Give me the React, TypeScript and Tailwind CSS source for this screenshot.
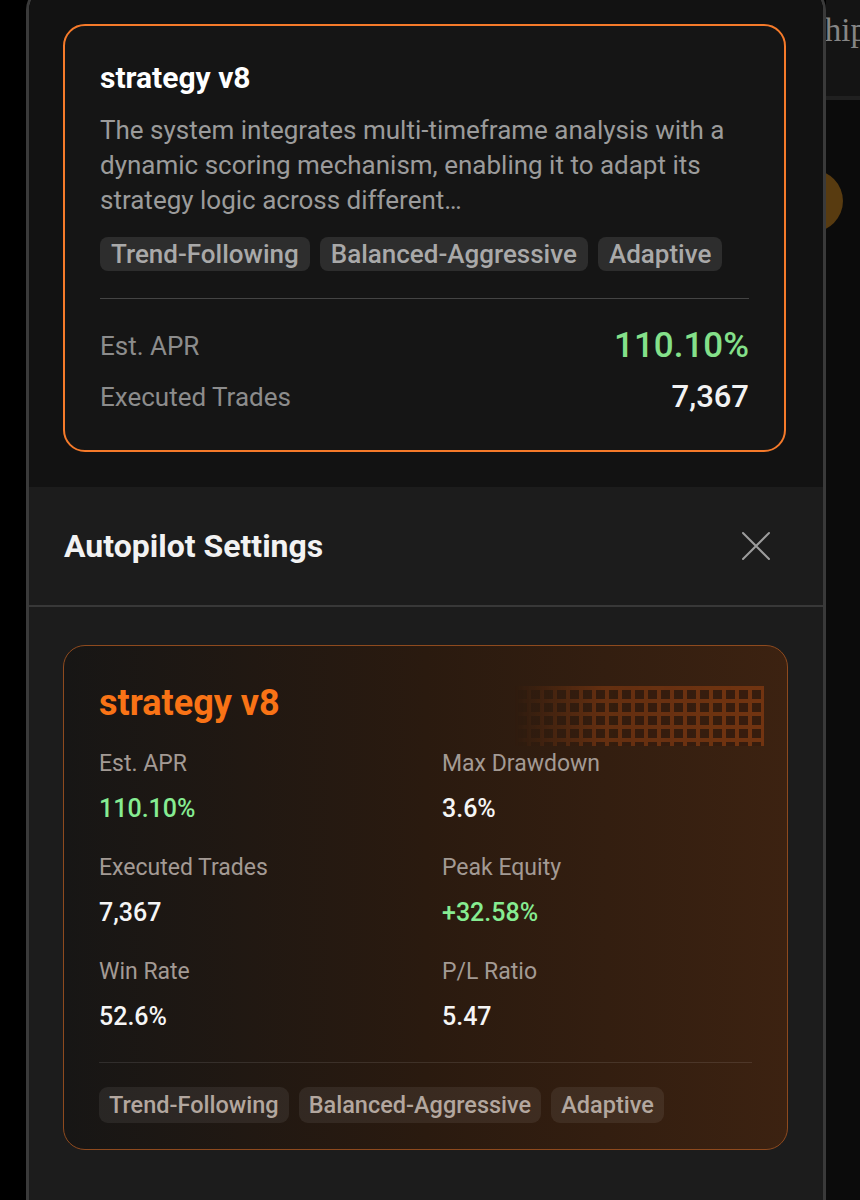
import React from 'react';

const tags = ['Trend-Following', 'Balanced-Aggressive', 'Adaptive'];

const stats = [
  { label: 'Est. APR', value: '110.10%', green: true },
  { label: 'Max Drawdown', value: '3.6%' },
  { label: 'Executed Trades', value: '7,367' },
  { label: 'Peak Equity', value: '+32.58%', green: true },
  { label: 'Win Rate', value: '52.6%' },
  { label: 'P/L Ratio', value: '5.47' },
];

function GridDeco() {
  return (
    <svg width="250" height="60" viewBox="0 0 250 60" className="absolute right-[23px] top-[40px]">
      <defs>
        <pattern id="cells" width="13" height="13" patternUnits="userSpaceOnUse">
          <rect width="13" height="13" fill="#8a3d12" />
          <rect x="4" y="4" width="9" height="9" fill="#361c0e" />
        </pattern>
        <linearGradient id="fade" x1="0" x2="1" y1="0" y2="0">
          <stop offset="0" stopColor="#fff" stopOpacity="0" />
          <stop offset="0.35" stopColor="#fff" stopOpacity="0.8" />
          <stop offset="1" stopColor="#fff" stopOpacity="1" />
        </linearGradient>
        <mask id="fademask">
          <rect width="250" height="60" fill="url(#fade)" />
        </mask>
      </defs>
      <rect width="250" height="60" fill="url(#cells)" mask="url(#fademask)" opacity="0.7" />
    </svg>
  );
}

export default function App() {
  return (
    <div className="flex h-[1200px] w-full overflow-hidden bg-black font-['Roboto',sans-serif]">
      <div className="w-[26px] shrink-0 bg-black" />

      {/* main panel */}
      <div className="-mt-[14px] flex w-[800px] shrink-0 flex-col overflow-hidden rounded-t-[24px] border-x-[3px] border-t-[3px] border-[#3a3a3a]">
        <div className="bg-[#121212] pb-[35px] pl-[34px] pr-[37px] pt-[35px]">
          <div className="rounded-[22px] border-2 border-[#f57a2a] bg-[#151515] px-[35px] pb-[31px] pt-[34px]">
            <h3 className="text-[30px] font-bold leading-[36px] text-white">strategy v8</h3>
            <p className="mt-[17px] text-[26px] leading-[35px] text-[#9b9b9b]">
              The system integrates multi-timeframe analysis with a dynamic scoring mechanism, enabling it to adapt its strategy logic across different…
            </p>
            <div className="mt-[19px] flex gap-[10px]">
              {tags.map((t) => (
                <span key={t} className="h-[34px] rounded-[8px] bg-[#2d2d2d] px-[11px] text-[26px] font-medium leading-[34px] text-[#a9a9a9]">
                  {t}
                </span>
              ))}
            </div>
            <div className="mt-[27px] h-px bg-[#444444]" />
            <div className="mt-[25px] flex h-[44px] items-center justify-between">
              <span className="text-[26px] text-[#8c8c8c]">Est. APR</span>
              <span className="text-[35px] font-medium text-[#84e08a]">110.10%</span>
            </div>
            <div className="mt-[7px] flex h-[44px] items-center justify-between">
              <span className="text-[26px] text-[#8c8c8c]">Executed Trades</span>
              <span className="text-[31px] font-medium text-[#f2f2f2]">7,367</span>
            </div>
          </div>
        </div>

        {/* autopilot sheet */}
        <div className="flex-1 bg-[#1c1c1c]">
          <div className="flex h-[120px] items-center justify-between border-b-2 border-[#383838] pl-[35px] pr-[52px]">
            <h2 className="text-[32px] font-bold text-[#f2f2f2]">Autopilot Settings</h2>
            <svg width="30" height="30" viewBox="0 0 30 30" fill="none" stroke="#9c9c9c" strokeWidth="2" strokeLinecap="round">
              <path d="M2 2L28 28M28 2L2 28" />
            </svg>
          </div>

          <div className="pl-[34px] pr-[35px] pt-[38px]">
            <div className="relative overflow-hidden rounded-[22px] border-[1.5px] border-[#8e4a1e] bg-[linear-gradient(90deg,#171615_0%,#2a1a0f_50%,#3c2211_100%)] px-[35px] pb-[26px] pt-[37px]">
              <GridDeco />
              <h3 className="relative text-[36px] font-bold leading-[40px] text-[#f97316]">strategy v8</h3>
              <div className="relative mt-[27px] grid grid-cols-2 gap-x-[33px] gap-y-[29px]">
                {stats.map((s) => (
                  <div key={s.label}>
                    <div className="text-[23px] leading-[28px] text-[#a39a94]">{s.label}</div>
                    <div className={`mt-[15px] text-[25px] font-medium leading-[32px] ${s.green ? 'text-[#86ec92]' : 'text-[#f5f5f5]'}`}>
                      {s.value}
                    </div>
                  </div>
                ))}
              </div>
              <div className="relative mt-[29px] h-px bg-white/10" />
              <div className="relative mt-[24px] flex gap-[10px]">
                {tags.map((t) => (
                  <span key={t} className="h-[36px] rounded-[9px] bg-white/[0.07] px-[10px] text-[23.5px] font-medium leading-[36px] text-[#b3a79f]">
                    {t}
                  </span>
                ))}
              </div>
            </div>
          </div>
        </div>
      </div>

      {/* page behind the panel */}
      <div className="flex flex-1 flex-col overflow-hidden bg-black">
        <div className="flex h-[96px] items-start bg-[#141414] pt-[6px]">
          <span className="-ml-[14px] font-['Liberation_Serif',serif] text-[33px] text-[#858585]">ship</span>
        </div>
        <div className="h-[4px] bg-[#202020]" />
        <div className="flex-1 bg-[#0b0b0b] pt-[70px]">
          <div className="-ml-[45px] h-[62px] w-[62px] rounded-full bg-[#6b4712] opacity-80" />
        </div>
      </div>
    </div>
  );
}
